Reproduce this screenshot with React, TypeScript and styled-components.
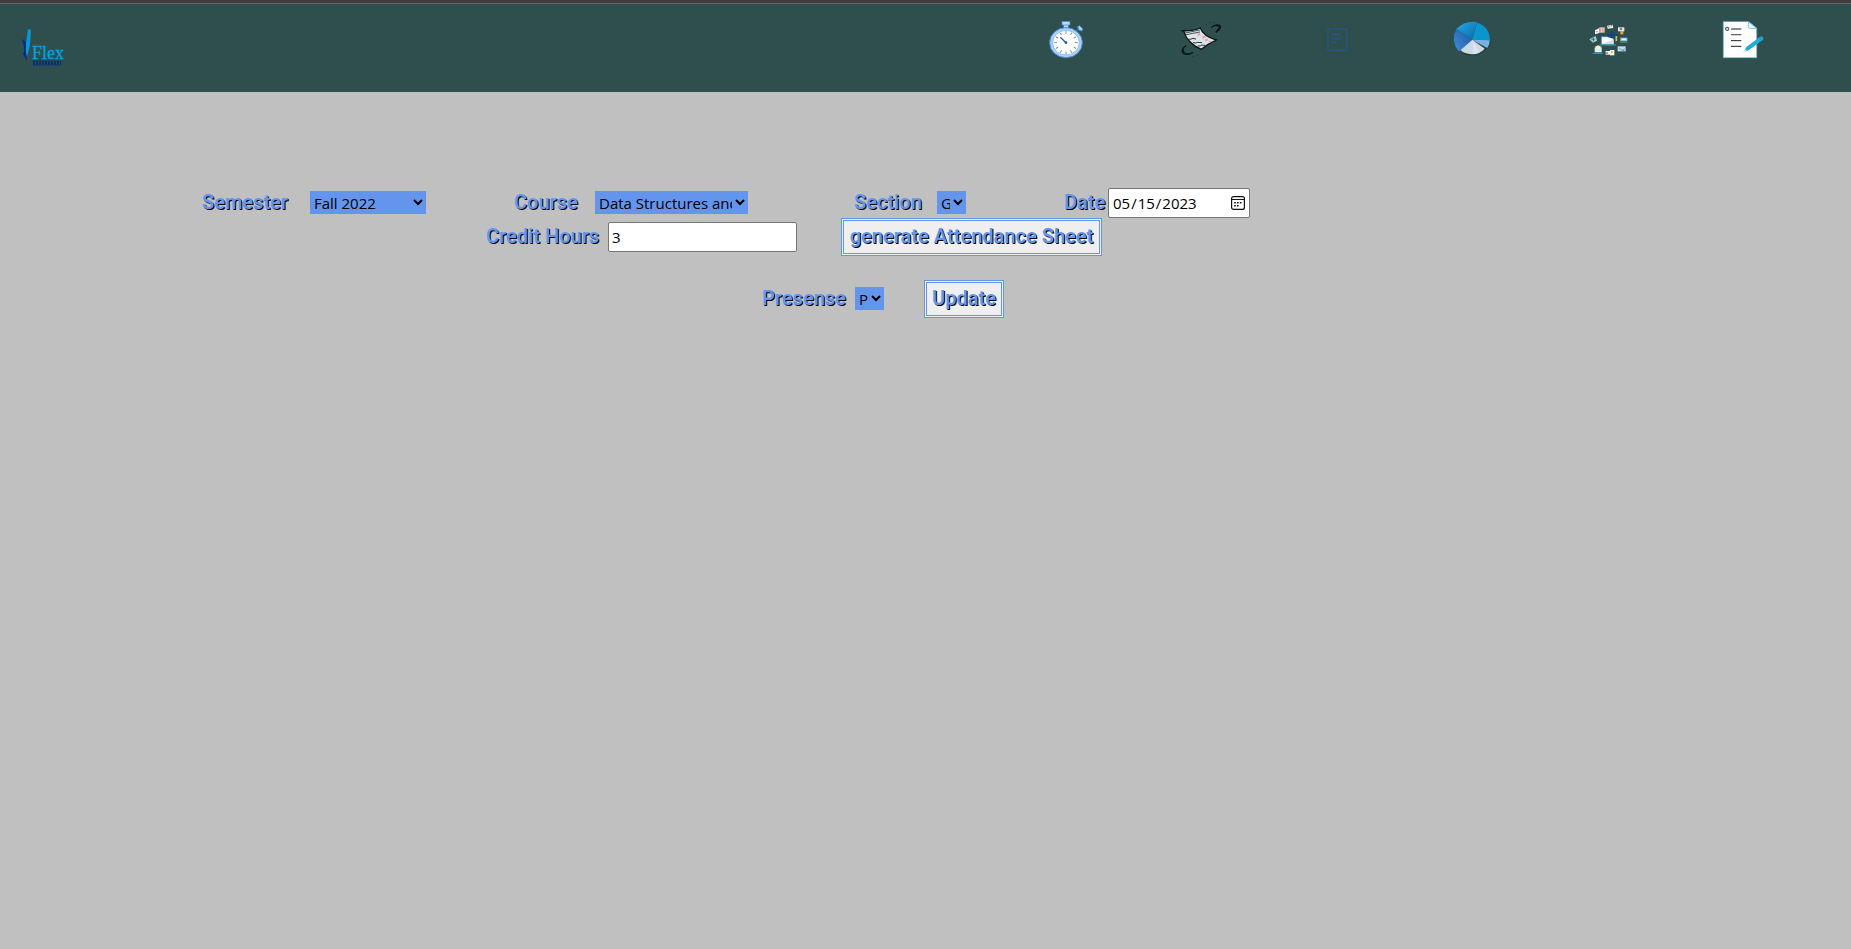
import React from "react";
import styled, { createGlobalStyle, css } from "styled-components";

const GlobalStyle = createGlobalStyle`
  *, *::before, *::after { box-sizing: border-box; }
  body {
    margin: 0;
    min-height: 100vh;
    background: #c0c0c0;
    font-family: "Open Sans", "Noto Sans", sans-serif;
  }
`;

const Header = styled.header`
  display: flex;
  align-items: flex-start;
  justify-content: space-between;
  height: 92px;
  padding: 13px 84px 0 18px;
  background: #2f4f4f;
  border-top: 3px solid #3f3a3b;
  box-shadow: inset 0 1px 0 #666868;
`;

const HomeLink = styled.a`
  display: block;
  height: 48px;
  margin-top: 8px;
`;

const Nav = styled.nav`
  display: flex;
  justify-content: space-between;
  width: 725px;
`;

const NavLink = styled.a`
  display: block;
  width: 48px;
  height: 48px;
`;

const Icon = styled.svg`
  display: block;
  width: 48px;
  height: 48px;
  overflow: visible;
`;

const Form = styled.form`
  padding-top: 92px;
`;

const Row = styled.div<{ $indent: number; $height: number; $top?: number }>`
  display: flex;
  align-items: center;
  height: ${(p) => p.$height}px;
  margin-top: ${(p) => p.$top ?? 0}px;
  padding-left: ${(p) => p.$indent}px;
`;

const heading = css`
  font-family: Roboto, "Liberation Sans", sans-serif;
  font-size: 20px;
  line-height: 24px;
  font-weight: 600;
  color: #6495ed;
  text-shadow: 1px 1px 0 #000;
  white-space: nowrap;
`;

const Label = styled.label<{ $width: number }>`
  ${heading}
  flex: none;
  width: ${(p) => p.$width}px;
  padding-bottom: 2px;
`;

const control = css`
  flex: none;
  font-family: "Open Sans", "Noto Sans", sans-serif;
  font-size: 15px;
  color: #000;
`;

const Select = styled.select<{ $width: number; $after: number }>`
  ${control}
  width: ${(p) => p.$width}px;
  height: 23px;
  margin: 0 ${(p) => p.$after}px 1px 0;
  padding: 0;
  border: 0;
  border-radius: 0;
  background: #6495ed;
`;

const Input = styled.input<{ $width: number; $after?: number }>`
  ${control}
  width: ${(p) => p.$width}px;
  height: 30px;
  margin-right: ${(p) => p.$after ?? 0}px;
  padding: 1px 3px;
  border: 1px solid #767676;
  border-radius: 2px;
  background: #fff;

  &::-webkit-calendar-picker-indicator {
    opacity: 0;
  }
`;

const DateField = styled.div`
  position: relative;
  display: flex;
`;

const CalendarIcon = styled.svg`
  position: absolute;
  top: 8px;
  right: 5px;
  width: 14px;
  height: 14px;
  pointer-events: none;
`;

const Button = styled.button<{ $width: number }>`
  ${heading}
  flex: none;
  width: ${(p) => p.$width}px;
  height: 38px;
  padding: 0 0 2px;
  border: 3px double #6495ed;
  background: #efefef;
`;

function Logo() {
  return (
    <Icon viewBox="0 0 48 48">
      <path d="M10 5q3 0 3 2l-1 14-3 12-2-6q1-8 3-22Z" fill="#0798d8" />
      <path d="M4 15l4 3v10l1 9-4-7q2-3 1-7Z" fill="#062b86" />
      <text x="14" y="35" fontFamily="Liberation Serif, serif" fontSize="18" fill="#079fdb" stroke="#079fdb" strokeWidth="0.3">Flex</text>
      <path d="M15 39h28" stroke="#0b2e78" strokeWidth="4" strokeDasharray="2 1" />
      <path d="M15 37h28M15 41h28" stroke="#0b2e78" strokeWidth="1" opacity=".7" />
    </Icon>
  );
}

function Stopwatch() {
  return (
    <Icon viewBox="36 48 144 144">
      <rect x="101" y="72" width="14" height="14" fill="#a9d2fb" stroke="#4680bd" strokeWidth="2" />
      <rect x="96" y="64" width="24" height="11" fill="#b5daff" stroke="#4680bd" strokeWidth="2" />
      <path d="M137 94l9-9M142 80l7-3 10 10-4 6-8-2Z" fill="#a9d2fb" stroke="#4680bd" strokeWidth="3" />
      <ellipse cx="108" cy="128" rx="49" ry="45" fill="#a9d2fb" stroke="#4f8bcc" strokeWidth="3" />
      <ellipse cx="108" cy="128" rx="40" ry="37" fill="#fff" stroke="#69a5e4" strokeWidth="2" />
      {Array.from({ length: 12 }, (_, i) => (
        <path key={i} d="M108 93v8" stroke="#48779f" strokeWidth="2.5" transform={`rotate(${i * 30} 108 128)`} />
      ))}
      <path d="M91 112l17 16" stroke="#285f91" strokeWidth="4" />
      <circle cx="108" cy="128" r="4" fill="#285f91" />
    </Icon>
  );
}

function AttendanceSheet() {
  return (
    <Icon viewBox="54 48 144 144" fill="none" strokeLinecap="round">
      <path d="M67 92q35 2 57-8 9 25 48 36-24 10-45 28-42-17-53-55Z" fill="#dfe3e8" stroke="#0a1518" strokeWidth="4" />
      <path d="M79 99l43-9M82 104l40-8" stroke="#465a5d" strokeWidth="3" />
      <path d="M89 118q7 1 13-3l8 2M103 128q8 3 13-1l12 1M118 138q7 1 11-3l8 1" stroke="#26383d" strokeWidth="3" />
      <path d="M114 101l9 3M122 100l-5 8M129 110l10 2M137 108l-5 9M139 119l8 2M145 117l-5 7M150 124l6 1" stroke="#e07a84" strokeWidth="2" />
      <path d="M158 82q14-12 25-5 6 7-11 18M80 137q-13 10-10 20 10 12 31 1" stroke="#0a1518" strokeWidth="4" />
      <path d="M168 76q12-1 14 7l-10 13M72 147q0 17 17 15" stroke="#0a1518" strokeWidth="4" />
      <path d="M142 74l3-2M153 69l3-1M164 66l3 1M101 170l3 1M114 167l3-2" stroke="#203c40" strokeWidth="3" />
    </Icon>
  );
}

function Report() {
  return (
    <Icon viewBox="39 48 144 144" fill="none" stroke="#27557c">
      <rect x="84" y="87" width="57" height="64" rx="2" strokeWidth="5" />
      <path d="M94 103h31M94 116h31M94 127h18" strokeWidth="5" />
    </Icon>
  );
}

function PieChart() {
  return (
    <Icon viewBox="54 48 144 144">
      <defs>
        <linearGradient id="pieTop" x1="0" y1="0" x2="1" y2="1">
          <stop stopColor="#25a8e6" /><stop offset="1" stopColor="#086aa9" />
        </linearGradient>
        <linearGradient id="pieLeft" x1="0" y1="1" x2="1" y2="0">
          <stop stopColor="#438cda" /><stop offset="1" stopColor="#17599e" />
        </linearGradient>
      </defs>
      <path d="M101 159q40 17 76-22l4-14" fill="none" stroke="#243f42" strokeWidth="6" />
      <path d="M127 119l-48-32q25-26 62-21Z" fill="url(#pieTop)" />
      <path d="M127 119l14-51q38 11 39 53Z" fill="#0995cd" />
      <path d="M127 119L79 87q-18 34 6 66l6-1Z" fill="url(#pieLeft)" />
      <path d="M127 119l52 2q1 13-7 23Z" fill="#79b3e6" />
      <path d="M127 119l37 27q-14 16-38 17-24-2-34-13Z" fill="#ced9e7" />
      <path d="M127 119l4 44 18-5Z" fill="#dce5ef" />
    </Icon>
  );
}

function Learning() {
  return (
    <Icon viewBox="42 48 144 144">
      <path d="M94 110h37v23H94Z" fill="#f5faff" stroke="#3d78a2" strokeWidth="2" />
      <path d="M94 133l37-14v14Z" fill="#cbdff0" />
      <path d="M88 135h50" stroke="#3a9fa4" strokeWidth="3" />
      <path d="M110 104l17-9 19 10-16 11-17-5Z" fill="#174775" />
      <path d="M139 108v15" stroke="#ecb53b" strokeWidth="5" />
      <path d="M75 91l13-7v15l-13 4Z" fill="#f5f9fa" /><path d="M88 82h16v16H88Z" fill="#e8c7bd" />
      <path d="M76 95h9M91 86v9M98 86v9" stroke="#d27773" strokeWidth="2" />
      <path d="M111 77l17-3 2 10-17 2Z" fill="#d9eeee" /><path d="M114 78l4 3M122 78l5-2" stroke="#c7675b" strokeWidth="3" />
      <path d="M144 82h19v12h-19Z" fill="#d8eef4" /><circle cx="153" cy="87" r="4" fill="#bd6258" /><path d="M151 93h9v10h-9Z" fill="#eba13b" />
      <path d="M58 118l19-10 4 14-12 6Z" fill="#9bd2d4" /><path d="M64 118h10M70 112v12" stroke="#386b74" strokeWidth="3" />
      <rect x="151" y="113" width="21" height="11" fill="#8dc7cb" /><path d="M155 118h13" stroke="#f5fbfb" strokeWidth="4" /><path d="M149 127h24" stroke="#3fa5a7" strokeWidth="2" />
      <rect x="74" y="142" width="21" height="15" fill="#dceef4" /><path d="M75 140l9-4 10 4-9 9Z" fill="#faf0bb" /><path d="M68 160h31" stroke="#3c98bd" strokeWidth="3" />
      <rect x="107" y="153" width="13" height="11" fill="#f2f4f4" /><path d="M108 159h6" stroke="#c96764" strokeWidth="5" /><rect x="120" y="150" width="13" height="16" fill="#f4f4e9" /><path d="M123 157h5" stroke="#edac2c" strokeWidth="6" />
      <path d="M143 139h24v15h-24Z" fill="#c2dbe8" /><path d="M147 144l10 8 8-6M158 149l9 9" stroke="#458190" strokeWidth="2" fill="none" />
    </Icon>
  );
}

function Registration() {
  return (
    <Icon viewBox="57 48 144 144">
      <path d="M70 65h76l24 20v88H70Z" fill="#fff" stroke="#69bddb" strokeWidth="2" />
      <path d="M146 66q-4 20 5 19h19Z" fill="#effaff" stroke="#72c8e4" strokeWidth="3" />
      <rect x="77" y="82" width="9" height="9" rx="2" fill="#bce7f3" stroke="#42464a" strokeWidth="3" />
      <path d="M86 83l14-6" stroke="#dae9ee" strokeWidth="2" />
      <path d="M93 87h31M93 104h31" stroke="#666" strokeWidth="4" />
      <path d="M93 122h31M93 139h31" stroke="#222" strokeWidth="3" />
      <path d="M130 157l9-16 41-31q6-3 10 4 1 5-3 7l-41 30Z" fill="#20acd8" />
      <path d="M179 110l10 12" stroke="#1589b2" strokeWidth="2" />
      <path d="M130 157l5-10 5 6Z" fill="#dff5fb" />
    </Icon>
  );
}

const navItems = [
  { name: "Attendance", Art: Stopwatch },
  { name: "Evaluation", Art: AttendanceSheet },
  { name: "Report", Art: Report },
  { name: "Statistics", Art: PieChart },
  { name: "Courses", Art: Learning },
  { name: "Registration", Art: Registration },
];

export default function App() {
  return (
    <>
      <GlobalStyle />
      <Header>
        <HomeLink href="#home" aria-label="Flex"><Logo /></HomeLink>
        <Nav>
          {navItems.map(({ name, Art }) => (
            <NavLink key={name} href={`#${name.toLowerCase()}`} aria-label={name}><Art /></NavLink>
          ))}
        </Nav>
      </Header>
      <main>
        <Form onSubmit={(e) => e.preventDefault()}>
          <Row $indent={202} $height={38}>
            <Label htmlFor="semester" $width={108}>Semester</Label>
            <Select id="semester" $width={116} $after={88}><option>Fall 2022</option></Select>
            <Label htmlFor="course" $width={81}>Course</Label>
            <Select id="course" $width={153} $after={106}><option>Data Structures and Algorithms</option></Select>
            <Label htmlFor="section" $width={83}>Section</Label>
            <Select id="section" $width={29} $after={98}><option>G</option></Select>
            <Label htmlFor="date" $width={44}>Date</Label>
            <DateField>
              <Input id="date" type="date" defaultValue="2023-05-15" $width={142} />
              <CalendarIcon viewBox="0 0 14 14" fill="none" stroke="#111" aria-hidden="true">
                <rect x="0.6" y="0.6" width="12.8" height="12.8" rx="2" strokeWidth="1.2" />
                <path d="M1 3.5h12" strokeWidth="1" />
                <path d="M6 6.7h1.6M8.8 6.7h1.6M3.2 6.7h1.6M3.2 9.7h1.6M6 9.7h1.6" strokeWidth="1.6" />
              </CalendarIcon>
            </DateField>
          </Row>
          <Row $indent={486} $height={30}>
            <Label htmlFor="credits" $width={122}>Credit Hours</Label>
            <Input id="credits" type="text" defaultValue="3" $width={189} $after={44} />
            <Button type="submit" $width={261}>generate Attendance Sheet</Button>
          </Row>
          <Row $indent={762} $height={38} $top={28}>
            <Label htmlFor="presence" $width={93}>Presense</Label>
            <Select id="presence" $width={29} $after={40}><option>P</option></Select>
            <Button type="button" $width={80}>Update</Button>
          </Row>
        </Form>
      </main>
    </>
  );
}
